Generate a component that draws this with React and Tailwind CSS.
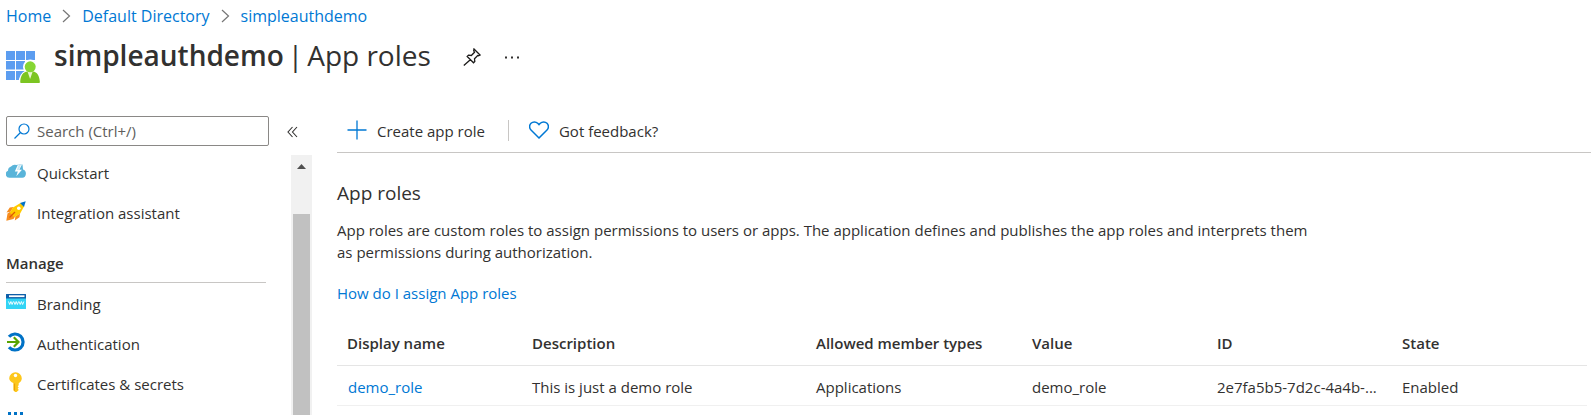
import React from "react";

const QuickstartIcon = () => (
  <svg width="20" height="20" viewBox="0 0 20 20" className="shrink-0" aria-hidden="true">
    <path d="M3.600 16.800A3.700 3.700 0 0 1 2 9.700 4.500 4.500 0 0 1 5 5.500 5 5 0 0 1 10.500 4L13 3.500h3.500L17 8.500A4.300 4.300 0 0 1 16.300 16.800z" fill="#59b4d9" />
    <path d="M12 3.500 8.800 10.600h3L10.300 15.200 16 8.800h-2.700L16 3.500z" fill="#fff" />
    <path d="M12.800 3.500h2.400l-2.600 5.500h-1.800z" fill="#59b4d9" opacity=".3" />
  </svg>
);

const RocketIcon = () => (
  <svg width="20" height="20" viewBox="0 0 20 20" className="shrink-0" aria-hidden="true">
    <path d="M7.500 6 3.800 6.500.5 11.500l4-.8zM14 12.500 13.500 16.200 8.800 19.500l.6-4.300z" fill="#f78d1e" />
    <path d="M4.500 10.500 1.500 12.500 .3 19.700 7.500 18l1.600-2.500z" fill="#f78d1e" />
    <path d="M14.500 2 7 6.500 3.800 11.700l4.500 4.500L14 12.700 18 5.500z" fill="#ffca00" />
    <path d="M19.700.3 14 2l4 4z" fill="#0072c6" />
    <circle cx="12.800" cy="7.300" r="1.800" fill="#fff" />
    <path d="M9 11 3.500 16.500" stroke="#dd5900" strokeWidth="1.300" />
  </svg>
);

const BrandingIcon = () => (
  <svg width="20" height="20" viewBox="0 0 20 20" className="shrink-0" aria-hidden="true">
    <path d="M0 2h20v14.500a.6.6 0 0 1-.6.600H.6a.6.6 0 0 1-.6-.6z" fill="#32d4f5" />
    <path d="M.6 2h18.800a.6.6 0 0 1 .6.600V6.500H0V2.600A.6.6 0 0 1 .6 2z" fill="#0f5ea8" />
    <path d="M3 3.300h15.500v1.800H3z" fill="#fff" />
    <path d="M2.500 9.500l1.200 3 1.200-3 1.200 3 1.200-3M7.800 9.500l1.200 3 1.200-3 1.200 3 1.200-3M13 9.500l1.200 3 1.200-3 1.200 3 1.200-3" fill="none" stroke="#fff" strokeWidth=".9" />
  </svg>
);

const AuthIcon = () => (
  <svg width="20" height="20" viewBox="0 0 20 20" className="shrink-0" aria-hidden="true">
    <path d="M3 4.800A8 8 0 1 1 3 15.200" fill="none" stroke="#0072c6" strokeWidth="3.200" />
    <path d="M1 10h11M7.800 5.300 12.500 10l-4.700 4.700" fill="none" stroke="#57a300" strokeWidth="2.200" />
  </svg>
);

const KeyIcon = () => (
  <svg width="20" height="20" viewBox="0 0 20 20" className="shrink-0" aria-hidden="true">
    <path d="M9.500.2a6.200 6.200 0 0 1 6.300 6c0 2.200-1.300 3.800-3.100 5v2l-1 1.100 1 1.200-1 1.200 1 1-.2.600-2.700 2.400-2.500-2.400v-7.200C5 10 3.200 8.400 3.200 6.200a6.200 6.200 0 0 1 6.300-6z" fill="#fdc71b" />
    <path d="M8.600 11.500v7.200" stroke="#e89b0c" strokeWidth="1" />
    <circle cx="9.500" cy="3.500" r="1.700" fill="#fff" />
  </svg>
);

const TokenIcon = () => (
  <svg width="20" height="20" viewBox="0 0 20 20" className="shrink-0" aria-hidden="true">
    <path d="M2 0h3v5H2zM8 0h3v5H8zM14 0h3v5h-3zM2 7h3v12H2zM8 7h3v12H8zM14 7h3v12h-3z" fill="#0072c6" />
  </svg>
);

const AppIcon = () => (
  <svg width="36" height="36" viewBox="0 0 36 36" aria-hidden="true">
    <path d="M0 1h9v9H0zM10 1h9v9h-9zM20 1h9v9h-9zM0 11h9v8.500H0zM10 11h9v8.500h-9zM20 11h9v8.500h-9zM0 21h9v9H0zM10 21h9v9h-9z" fill="#5c9df0" />
    <path d="M13.500 33.500c.2-7 3-10.500 6.500-12a6.300 6.300 0 1 1 8.500 0c3.500 1.500 6 5 6.200 12z" fill="#fff" stroke="#fff" strokeWidth="2" />
    <path d="M14.200 32.200c.4-6.700 2.800-10.200 7-10.700h5.800c4 .5 6.500 4 6.900 10.700 0 .5-.4.800-.9.800H15.100c-.5 0-.9-.3-.9-.8z" fill="#7cc522" />
    <path d="M21.500 21.500h5.200l-2.600 7.500z" fill="#e8f6d2" />
    <circle cx="24.200" cy="16.800" r="5.500" fill="#86d633" />
  </svg>
);

const Chevron = () => (
  <svg width="9" height="14" viewBox="0 0 9 14" fill="none" stroke="#767676" strokeWidth="1.200" aria-hidden="true">
    <path d="M1 1l6.500 6L1 13" />
  </svg>
);

const topLinks = [
  { label: "Quickstart", Icon: QuickstartIcon },
  { label: "Integration assistant", Icon: RocketIcon },
];

const manageLinks = [
  { label: "Branding", Icon: BrandingIcon },
  { label: "Authentication", Icon: AuthIcon },
  { label: "Certificates & secrets", Icon: KeyIcon },
  { label: "Token configuration", Icon: TokenIcon, iconOnly: true },
];

const NavList = ({ items }) => (
  <ul>
    {items.map(({ label, Icon, iconOnly }) => (
      <li key={label}>
        <a href="#" aria-label={iconOnly ? label : undefined} className="flex h-10 items-start gap-[11px] pt-1.5">
          <Icon />
          {!iconOnly && <span className="pt-0.5 leading-5">{label}</span>}
        </a>
      </li>
    ))}
  </ul>
);

const columns = [
  { label: "Display name", width: "w-[185px]" },
  { label: "Description", width: "w-[284px]" },
  { label: "Allowed member types", width: "w-[216px]" },
  { label: "Value", width: "w-[185px]" },
  { label: "ID", width: "w-[185px]" },
  { label: "State", width: "" },
];

export default function App() {
  return (
    <div className="flex h-screen flex-col overflow-hidden bg-white font-['Open_Sans','Noto_Sans',sans-serif] text-[15px] text-[#323130]">
      <header className="shrink-0 pl-1.5">
        <nav aria-label="Breadcrumb" className="flex h-8 items-center gap-[11px] text-base text-[#0078d4]">
          <a href="#">Home</a>
          <Chevron />
          <a href="#">Default Directory</a>
          <Chevron />
          <a href="#">simpleauthdemo</a>
        </nav>
        <div className="flex h-[68px] items-start">
          <div className="pt-[18px]">
            <AppIcon />
          </div>
          <h1 className="ml-3 flex gap-1 text-[28px] leading-[46px]">
            <span className="font-semibold">simpleauthdemo</span>
            <span>|</span>
            <span>App roles</span>
          </h1>
          <button type="button" aria-label="Pin" className="ml-8 pt-4">
            <svg width="18" height="18" viewBox="0 0 18 18" fill="none" stroke="#1b1a19" strokeWidth="1.300" aria-hidden="true">
              <path d="M11 1l6 6-1.500.8-.8-.3-3.200 3.200.3 2.800-1.300 1.300-6.300-6.300 1.300-1.300 2.800.3 3.200-3.200-.8-1.600zM7.300 11.700.8 17.500" />
            </svg>
          </button>
          <button type="button" aria-label="More" className="ml-6 pt-6">
            <svg width="14" height="3" viewBox="0 0 14 3" fill="#323130" aria-hidden="true">
              <path d="M0 .5h2v2H0zM6 .5h2v2H6zM12 .5h2v2h-2z" />
            </svg>
          </button>
        </div>
      </header>

      <div className="flex min-h-0 flex-1">
        <aside className="flex w-[312px] shrink-0 flex-col pl-1.5">
          <div className="flex h-[55px] shrink-0 items-start pt-4">
            <label htmlFor="menu-search" className="flex h-[30px] w-[263px] items-center gap-[7px] rounded-xs border border-[#8a8886] px-[7px]">
              <svg width="16" height="16" viewBox="0 0 16 16" className="shrink-0" fill="none" stroke="#0078d4" strokeWidth="1.200" aria-hidden="true">
                <circle cx="10" cy="6" r="5" />
                <path d="M6.500 9.500.5 15.500" />
              </svg>
              <input id="menu-search" type="text" aria-label="Search" placeholder="Search (Ctrl+/)" className="w-full min-w-0 outline-none placeholder:text-[#605e5c]" />
            </label>
            <button type="button" aria-label="Collapse menu" className="ml-[18px] flex h-8 items-center">
              <svg width="11" height="12" viewBox="0 0 11 12" fill="none" stroke="#323130" strokeWidth="1.100" aria-hidden="true">
                <path d="M5.500 1 1 6l4.500 5M10 1 5.500 6l4.500 5" />
              </svg>
            </button>
          </div>
          <div className="flex min-h-0 flex-1">
            <nav aria-label="Resource menu" className="min-w-0 flex-1 overflow-hidden">
              <NavList items={topLinks} />
              <h2 className="mt-4 mr-[25px] mb-[3px] flex h-8 items-start border-b border-[#c8c6c4] leading-6 font-semibold">Manage</h2>
              <NavList items={manageLinks} />
            </nav>
            <div aria-hidden="true" className="flex w-[21px] flex-col items-stretch bg-[#f1f1f1] px-0.5">
              <div className="flex h-[59px] justify-center pt-[9px]">
                <svg width="9" height="5" viewBox="0 0 9 5" fill="#505050">
                  <path d="M0 5 4.500 0 9 5z" />
                </svg>
              </div>
              <div className="flex-1 bg-[#c1c1c1]" />
            </div>
          </div>
        </aside>

        <main className="min-w-0 flex-1 pl-[25px]">
          <div className="flex h-[53px] items-center border-b border-[#c8c6c4] pt-2 pl-2.5">
            <button type="button" className="flex items-center gap-2.5">
              <svg width="20" height="20" viewBox="0 0 20 20" fill="none" stroke="#0078d4" strokeWidth="1.300" aria-hidden="true">
                <path d="M10 .5v19M.5 10h19" />
              </svg>
              <span className="pt-0.5">Create app role</span>
            </button>
            <div className="mr-5 ml-[23px] h-[21px] border-l border-[#c8c6c4]" />
            <button type="button" className="flex items-center gap-2.5">
              <svg width="20" height="18" viewBox="0 0 20 18" fill="none" stroke="#0078d4" strokeWidth="1.500" aria-hidden="true">
                <path d="M10 17 2 9a4.700 4.700 0 0 1 0-6.700 4.700 4.700 0 0 1 6.700 0L10 3.600l1.300-1.300a4.700 4.700 0 0 1 6.700 0A4.700 4.700 0 0 1 18 9z" />
              </svg>
              <span className="pt-0.5">Got feedback?</span>
            </button>
          </div>

          <h2 className="mt-6 text-[19px] leading-8">App roles</h2>
          <p className="mt-2.5 max-w-[980px] leading-[22px]">
            App roles are custom roles to assign permissions to users or apps. The application defines and publishes the app roles and interprets them as permissions during authorization.
          </p>
          <p className="mt-[18px] leading-6">
            <a href="#" className="text-[#0078d4]">How do I assign App roles</a>
          </p>

          <div className="mt-4 pr-1">
            <table className="w-full table-fixed border-collapse text-left">
              <thead>
                <tr className="h-11 border-b border-[#e5e5e5]">
                  {columns.map((c) => (
                    <th key={c.label} scope="col" className={`${c.width} pl-2.5 font-semibold`}>{c.label}</th>
                  ))}
                </tr>
              </thead>
              <tbody>
                <tr className="h-10 border-b border-[#f0f0f0]">
                  <td className="truncate pt-1 pl-[11px]">
                    <a href="#" className="text-[#0078d4]">demo_role</a>
                  </td>
                  <td className="truncate pt-1 pl-2.5">This is just a demo role</td>
                  <td className="truncate pt-1 pl-2.5">Applications</td>
                  <td className="truncate pt-1 pl-2.5">demo_role</td>
                  <td className="truncate pt-1 pl-2.5">2e7fa5b5-7d2c-4a4b-...</td>
                  <td className="truncate pt-1 pl-2.5">Enabled</td>
                </tr>
              </tbody>
            </table>
          </div>
        </main>
      </div>
    </div>
  );
}
